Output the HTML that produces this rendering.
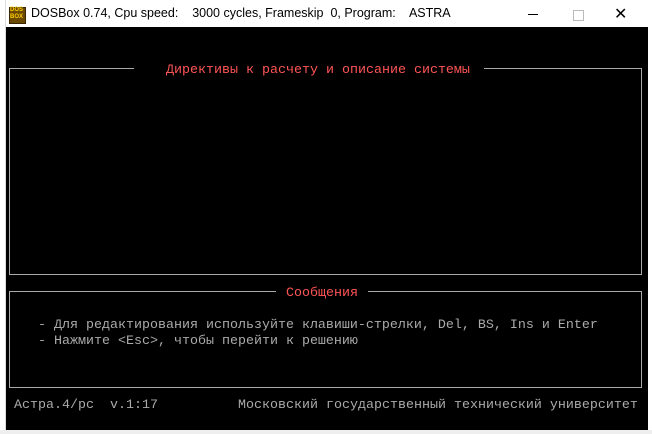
<!DOCTYPE html>
<html><head><meta charset="utf-8"><style>
body{margin:0;width:652px;height:434px;background:#fff;position:relative;overflow:hidden;font-family:"Liberation Sans",sans-serif}
.t{position:absolute;white-space:pre;font-family:"Liberation Mono","DejaVu Sans Mono",monospace;font-size:13.33px;line-height:16px;color:#aaa}
.r{color:#ff5555}
.box{position:absolute;border:1px solid #aaa}
.lbl{position:absolute;background:#000;height:16px}
</style></head><body>
<div style="position:absolute;left:5px;top:0;width:1px;height:430px;background:#ddd"></div>
<div style="position:absolute;left:9px;top:7px;width:15px;height:15px;background:#6b4a00;border:1px solid #3a2800"></div>
<div style="position:absolute;left:10px;top:7px;font:bold 6px 'Liberation Sans';color:#ffcc00;line-height:7px">DOS<br>BOX</div>
<div style="position:absolute;left:31px;top:6px;font-size:12.5px;color:#000">DOSBox 0.74, Cpu speed:&nbsp;&nbsp;&nbsp;&nbsp;3000 cycles, Frameskip&nbsp; 0, Program:&nbsp;&nbsp;&nbsp; ASTRA</div>
<div style="position:absolute;left:528px;top:14px;width:10px;height:1px;background:#000"></div>
<div style="position:absolute;left:573px;top:10px;width:9px;height:9px;border:1px solid #bbb"></div>
<div style="position:absolute;left:614px;top:4px;font-size:16px;color:#000">✕</div>
<div style="position:absolute;left:6px;top:27px;width:642px;height:403px;background:#000"></div>
<div style="position:absolute;left:0;top:430px;width:652px;height:4px;background:#eee"></div>
<div class="box" style="left:9px;top:68px;width:631px;height:205px"></div>
<div class="lbl" style="left:134px;top:61px;width:350px"></div>
<div class="t r" style="left:166px;top:63px">Директивы к расчету и описание системы</div>
<div class="box" style="left:9px;top:291px;width:631px;height:95px"></div>
<div class="lbl" style="left:276px;top:284px;width:92px"></div>
<div class="t r" style="left:286px;top:286px">Сообщения</div>
<div class="t" style="left:38px;top:318px">- Для редактирования используйте клавиши-стрелки, Del, BS, Ins и Enter</div>
<div class="t" style="left:38px;top:334px">- Нажмите &lt;Esc&gt;, чтобы перейти к решению</div>
<div class="t" style="left:14px;top:398px">Астра.4/рс  v.1:17</div>
<div class="t" style="left:238px;top:398px">Московский государственный технический университет</div>
</body></html>
